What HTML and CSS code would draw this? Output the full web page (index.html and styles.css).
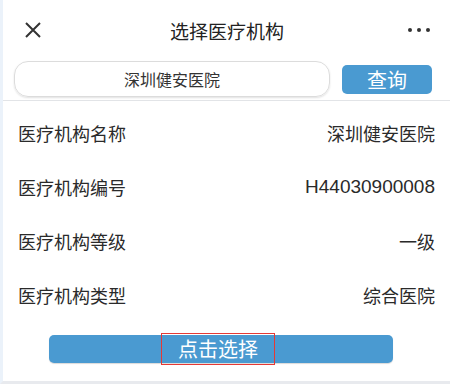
FILE: index.html
```html
<!DOCTYPE html>
<html lang="zh-CN">
<head>
    <meta charset="UTF-8">
    <meta name="viewport" content="width=device-width, initial-scale=1.0">
    <title>选择医疗机构</title>
    <link rel="stylesheet" href="styles.css">
</head>
<body>
    <div class="page">
        <!-- Top bar -->
        <div class="header">
            <svg class="close" width="18" height="18" viewBox="0 0 18 18">
                <path d="M2 2 L16 16 M16 2 L2 16" stroke="#333" stroke-width="2" fill="none"/>
            </svg>
            <div class="title">选择医疗机构</div>
            <div class="more"><span></span><span></span><span></span></div>
        </div>

        <!-- Search -->
        <div class="search">
            <div class="search-input">深圳健安医院</div>
            <button class="btn-query">查询</button>
        </div>

        <!-- Detail rows -->
        <div class="list">
            <div class="row"><span class="label">医疗机构名称</span><span class="value">深圳健安医院</span></div>
            <div class="row"><span class="label">医疗机构编号</span><span class="value num">H44030900008</span></div>
            <div class="row"><span class="label">医疗机构等级</span><span class="value">一级</span></div>
            <div class="row"><span class="label">医疗机构类型</span><span class="value">综合医院</span></div>
        </div>

        <button class="btn-select"><span class="mark">点击选择</span></button>
    </div>
</body>
</html>
```

FILE: styles.css
```css
body {
    margin: 0;
    font-family: "Noto Sans CJK SC", "Noto Sans", sans-serif;
    color: #2a2a2a;
    background: #fff;
}

.page {
    height: 384px;
    box-sizing: border-box;
    border-left: 3px solid #ebf2fa;
    border-bottom: 3px solid #e8eaee;
    overflow: hidden;
}

.header {
    height: 60px;
    display: flex;
    align-items: center;
    padding: 0 20px 0 21px;
}

.close {
    display: block;
}

.title {
    flex: 1;
    text-align: center;
    font-size: 19px;
    color: #222;
    margin-left: 4px;
}

.more {
    display: flex;
    gap: 5px;
}

.more span {
    width: 4px;
    height: 4px;
    border-radius: 50%;
    background: #333;
}

.search {
    display: flex;
    align-items: center;
    gap: 12px;
    padding: 1px 18px 3px 11px;
    border-bottom: 1px solid #e2e4e7;
}

.search-input {
    width: 316px;
    height: 36px;
    box-sizing: border-box;
    border: 1px solid #dcdcdc;
    border-radius: 14px;
    box-shadow: 0 1px 2px rgba(0, 0, 0, 0.12);
    display: flex;
    align-items: center;
    justify-content: center;
    font-size: 16px;
    color: #333;
}

.btn-query {
    width: 90px;
    height: 29px;
    border: none;
    border-radius: 5px;
    background: #4a9ad1;
    color: #fff;
    font-family: inherit;
    font-size: 20px;
    line-height: 29px;
    padding: 0;
}

.list {
    padding: 5px 15px 0 15px;
}

.row {
    height: 54px;
    display: flex;
    align-items: center;
    justify-content: space-between;
    font-size: 18px;
}

.value.num {
    font-family: "Liberation Sans", Arial, sans-serif;
    font-size: 19px;
}

.btn-select {
    display: flex;
    align-items: center;
    justify-content: center;
    width: 344px;
    height: 28px;
    margin: 13px 0 0 46px;
    border: none;
    border-radius: 5px;
    background: #4a9ad1;
    box-shadow: 0 1px 1px rgba(0, 0, 0, 0.15);
    padding: 0;
    color: #fff;
    font-family: inherit;
    font-size: 20px;
    overflow: visible;
}

.mark {
    display: inline-block;
    height: 30px;
    line-height: 30px;
    padding: 0 16px;
    border: 1px solid #e53935;
    margin-right: 6px;
}
```
